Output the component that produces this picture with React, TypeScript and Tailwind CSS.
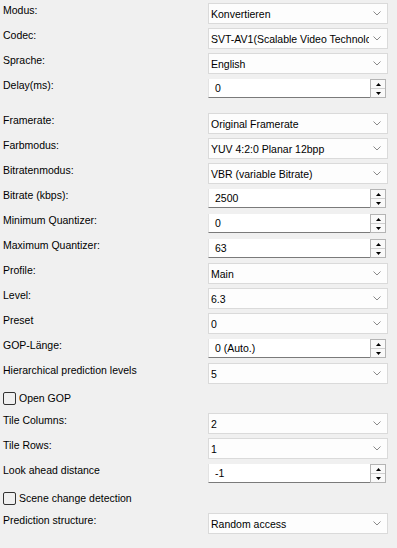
import React from "react";

type Row =
  | { kind: "combo"; label: string; value: string }
  | { kind: "spin"; label: string; value: string }
  | { kind: "check"; label: string }
  | { kind: "gap" };

const rows: Row[] = [
  { kind: "combo", label: "Modus:", value: "Konvertieren" },
  { kind: "combo", label: "Codec:", value: "SVT-AV1(Scalable Video Technology for AV1)" },
  { kind: "combo", label: "Sprache:", value: "English" },
  { kind: "spin", label: "Delay(ms):", value: "0" },
  { kind: "gap" },
  { kind: "combo", label: "Framerate:", value: "Original Framerate" },
  { kind: "combo", label: "Farbmodus:", value: "YUV 4:2:0 Planar 12bpp" },
  { kind: "combo", label: "Bitratenmodus:", value: "VBR (variable Bitrate)" },
  { kind: "spin", label: "Bitrate (kbps):", value: "2500" },
  { kind: "spin", label: "Minimum Quantizer:", value: "0" },
  { kind: "spin", label: "Maximum Quantizer:", value: "63" },
  { kind: "combo", label: "Profile:", value: "Main" },
  { kind: "combo", label: "Level:", value: "6.3" },
  { kind: "combo", label: "Preset", value: "0" },
  { kind: "spin", label: "GOP-Länge:", value: "0 (Auto.)" },
  { kind: "combo", label: "Hierarchical prediction levels", value: "5" },
  { kind: "check", label: "Open GOP" },
  { kind: "combo", label: "Tile Columns:", value: "2" },
  { kind: "combo", label: "Tile Rows:", value: "1" },
  { kind: "spin", label: "Look ahead distance", value: "-1" },
  { kind: "check", label: "Scene change detection" },
  { kind: "combo", label: "Prediction structure:", value: "Random access" },
];

function Chevron() {
  return (
    <svg width="8" height="5" viewBox="0 0 8 5" className="shrink-0">
      <path d="M0.5 0.5 L4 4 L7.5 0.5" fill="none" stroke="#8a8a8a" strokeWidth="1" />
    </svg>
  );
}

function Combo({ value }: { value: string }) {
  return (
    <div className="flex items-center w-[180px] h-[21px] bg-[#fdfdfd] border border-[#dadada]">
      <span className="flex-1 overflow-hidden whitespace-nowrap pl-[2px] pt-[1px]">{value}</span>
      <div className="w-[18px] flex justify-center items-center pl-[2px] pr-[4px]">
        <Chevron />
      </div>
    </div>
  );
}

function Spin({ value }: { value: string }) {
  return (
    <div className="flex w-[178px] h-[19px]">
      <div className="flex-1 flex items-center bg-white border-l border-l-[#e3e3e3] border-b border-b-[#7a7a7a] pl-[6px]">
        {value}
      </div>
      <div className="w-[16px] flex flex-col border border-[#b4b4b4] bg-[#f9f9f9]">
        <div className="flex-1 flex items-center justify-center border-b border-[#cfcfcf]">
          <svg width="5" height="3" viewBox="0 0 5 3"><path d="M2.5 0 L5 3 L0 3 Z" fill="#000" /></svg>
        </div>
        <div className="flex-1 flex items-center justify-center">
          <svg width="5" height="3" viewBox="0 0 5 3"><path d="M0 0 L5 0 L2.5 3 Z" fill="#000" /></svg>
        </div>
      </div>
    </div>
  );
}

function Check({ label }: { label: string }) {
  return (
    <div className="flex items-center h-[25px] pl-[3px]">
      <div className="w-[13px] h-[13px] border border-[#333] rounded-[2px] bg-[#f0f0f0]" />
      <span className="ml-[3px]">{label}</span>
    </div>
  );
}

export default function App() {
  return (
    <div
      className="w-[397px] h-[548px] bg-[#f0f0f0] text-[10.5px] leading-[13px] text-black pt-[1px] overflow-hidden"
      style={{ fontFamily: '"Liberation Sans", Arial, sans-serif' }}
    >
      {rows.map((r, i) => {
        if (r.kind === "gap") return <div key={i} className="h-[10px]" />;
        if (r.kind === "check") return <Check key={i} label={r.label} />;
        return (
          <div key={i} className="flex h-[25px]">
            <div className="w-[208px] pl-[3px] pt-[3px] whitespace-nowrap">{r.label}</div>
            <div className={r.kind === "combo" ? "pt-[2px]" : "pt-[3px]"}>
              {r.kind === "combo" ? <Combo value={r.value} /> : <Spin value={r.value} />}
            </div>
          </div>
        );
      })}
    </div>
  );
}
